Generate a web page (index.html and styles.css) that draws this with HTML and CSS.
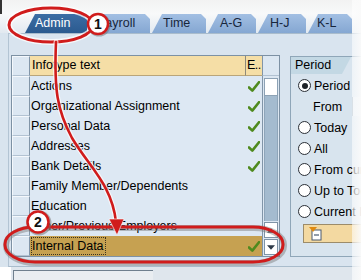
FILE: index.html
```html
<!DOCTYPE html>
<html>
<head>
<meta charset="utf-8">
<link rel="stylesheet" href="styles.css">
</head>
<body>
<div class="screen">
  <div class="top"></div>
  <div class="tabs">
    <div class="tab active w-admin">Admin</div>
    <div class="tab w-payroll">Payroll</div>
    <div class="tab w-time">Time</div>
    <div class="tab w-ag">A-G</div>
    <div class="tab w-hj">H-J</div>
    <div class="tab w-kl">K-L</div>
  </div>
  <div class="panel">
    <div class="table">
      <div class="sel"></div><div class="hcell">Infotype text</div><div class="hcell ecol">E..</div><div class="hscroll"></div>
      <div class="sel"></div><div class="cell">Actions</div><div class="ecell"><svg class="chk" viewBox="0 0 12 11"><path d="M1 6.5 L4.3 9.6 L11 1.2" /></svg></div>
      <div class="scroll">
        <div class="thumb"></div>
        <div class="track"></div>
        <div class="sbtn"><svg viewBox="0 0 9 5" class="arr"><path d="M0 5 L4.5 0 L9 5Z"/></svg></div>
        <div class="sbtn"><svg viewBox="0 0 9 5" class="arr"><path d="M0 0 L4.5 5 L9 0Z"/></svg></div>
      </div>
      <div class="sel"></div><div class="cell">Organizational Assignment</div><div class="ecell"><svg class="chk" viewBox="0 0 12 11"><path d="M1 6.5 L4.3 9.6 L11 1.2" /></svg></div>
      <div class="sel"></div><div class="cell">Personal Data</div><div class="ecell"><svg class="chk" viewBox="0 0 12 11"><path d="M1 6.5 L4.3 9.6 L11 1.2" /></svg></div>
      <div class="sel"></div><div class="cell">Addresses</div><div class="ecell"><svg class="chk" viewBox="0 0 12 11"><path d="M1 6.5 L4.3 9.6 L11 1.2" /></svg></div>
      <div class="sel"></div><div class="cell">Bank Details</div><div class="ecell"><svg class="chk" viewBox="0 0 12 11"><path d="M1 6.5 L4.3 9.6 L11 1.2" /></svg></div>
      <div class="sel"></div><div class="cell">Family Member/Dependents</div><div class="ecell"></div>
      <div class="sel"></div><div class="cell">Education</div><div class="ecell"></div>
      <div class="sel"></div><div class="cell">Other/Previous Employers</div><div class="ecell"></div>
      <div class="sel"></div><div class="cell hl"><span class="focus">Internal Data</span></div><div class="ecell hl"><svg class="chk" viewBox="0 0 12 11"><path d="M1 6.5 L4.3 9.6 L11 1.2" /></svg></div>
    </div>
    <div class="group">
      <div class="ghead">Period</div>
      <div class="opts">
        <div class="opt"><span class="radio on"></span><span>Period</span></div>
        <div class="opt from"><span>From</span><span class="field"></span></div>
        <div class="opt"><span class="radio"></span><span>Today</span></div>
        <div class="opt"><span class="radio"></span><span>All</span></div>
        <div class="opt"><span class="radio"></span><span>From current date</span></div>
        <div class="opt"><span class="radio"></span><span>Up to Today</span></div>
        <div class="opt"><span class="radio"></span><span>Current Period</span></div>
        <div class="gbtn">
          <svg class="gicon" viewBox="0 0 14 14">
            <rect x="3" y="3" width="9" height="10" fill="#fff" stroke="#4a5a70" stroke-width="1"/>
            <path d="M5 8 H10" stroke="#4a5a70" stroke-width="1.2"/>
            <path d="M0 0 H8 L4 5Z" fill="#e08a10"/>
          </svg>
        </div>
      </div>
    </div>
  </div>
  <div class="bottom">
    <div class="bwhite"></div>
    <div class="bbox"></div>
  </div>

  <svg class="annot" viewBox="0 0 361 280" width="361" height="280">
    <g fill="none" stroke-linecap="round">
      <ellipse cx="51" cy="25" rx="42" ry="17" stroke="rgba(255,255,255,0.75)" stroke-width="6"/>
      <ellipse cx="51" cy="25" rx="42" ry="17" stroke="#d01c1c" stroke-width="3"/>
      <path d="M56 42 C54 90, 57 110, 72 138 C90 168, 112 185, 116 222" stroke="rgba(255,255,255,0.7)" stroke-width="5"/>
      <path d="M56 42 C54 90, 57 110, 72 138 C90 168, 112 185, 116 222" stroke="#d01c1c" stroke-width="2.6"/>
      <rect x="5" y="227" width="278" height="35" rx="30" ry="17" stroke="rgba(120,120,120,0.45)" stroke-width="6" transform="translate(1 1)"/>
      <rect x="5" y="227" width="278" height="35" rx="30" ry="17" stroke="#d01c1c" stroke-width="3"/>
    </g>
    <path d="M109 219 L124 219 L117 235Z" fill="#d01c1c" stroke="rgba(255,255,255,0.6)" stroke-width="1"/>
    <circle cx="99" cy="25" r="11.5" fill="rgba(110,110,110,0.5)"/>
    <circle cx="98" cy="24" r="10" fill="#fff" stroke="#d01c1c" stroke-width="2.5"/>
    <text x="98" y="29" class="num">1</text>
    <circle cx="39" cy="223" r="12.5" fill="rgba(110,110,110,0.5)"/>
    <circle cx="38" cy="222" r="10.5" fill="#fff" stroke="#d01c1c" stroke-width="2.5"/>
    <text x="38" y="227" class="num">2</text>
  </svg>
  <div class="fade"></div>
</div>
</body>
</html>
```

FILE: styles.css
```css
* { box-sizing: border-box; }
html, body { margin: 0; padding: 0; }
body {
  width: 361px;
  height: 280px;
  overflow: hidden;
  font-family: "Liberation Sans", Arial, sans-serif;
  font-size: 12.5px;
  color: #000;
}
.screen {
  position: relative;
  width: 361px;
  height: 280px;
  overflow: hidden;
  display: flex;
  flex-direction: column;
  background: #d9e4ee;
}
.top {
  flex: none;
  height: 14px;
  background: linear-gradient(#f2f2f2, #f8f9fa);
  border-left: 2px solid #333;
}
.tabs {
  flex: none;
  height: 19px;
  display: flex;
  align-items: flex-end;
  gap: 2px;
  padding-left: 25px;
  background: linear-gradient(#f8f9fa, #e2e9f0);
}
.tab {
  height: 19px;
  line-height: 19px;
  padding-left: 10px;
  white-space: nowrap;
  color: #17263c;
  background: linear-gradient(#a2bfe3, #85a7d2);
  clip-path: polygon(10px 0, calc(100% - 5px) 0, 100% 5px, 100% 100%, 0 100%);
}
.tab.active {
  color: #fff;
  background: linear-gradient(#3c6da4, #2b5a8f);
}
.w-admin { width: 62px; }
.w-payroll { width: 61px; padding-left: 8px; }
.w-time { width: 54px; padding-left: 11px; }
.w-ag { width: 48px; padding-left: 12px; }
.w-hj { width: 48px; padding-left: 12px; }
.w-kl { width: 44px; padding-left: 9px; }

.panel {
  flex: none;
  height: 234px;
  margin-left: 8px;
  border-top: 1px solid #a9bccc;
  border-left: 1px solid #b3c4d3;
  border-bottom: 1px solid #a9bccc;
  display: flex;
  align-items: flex-start;
  padding: 21px 0 0 2px;
  background: #d9e4ef;
}
.table {
  flex: none;
  display: grid;
  grid-template-columns: 18px 215px 17px 17px;
  grid-template-rows: repeat(10, 20px);
  border: 1px solid #7d91a4;
  background: #dde8f3;
}
.sel {
  background: #dce7f2;
  border-top: 1px solid #f4f8fc;
  border-left: 1px solid #f4f8fc;
  border-right: 1px solid #8195a8;
  border-bottom: 1px solid #b2c2d2;
}
.hcell {
  background: #f5dea6;
  border-bottom: 1px solid #b9a57a;
  line-height: 19px;
  padding-left: 2px;
  white-space: nowrap;
}
.ecol {
  border-left: 1px solid #8e8a7a;
  padding-left: 1px;
  letter-spacing: -0.5px;
  overflow: hidden;
}
.hscroll {
  border-left: 1px solid #8195a8;
  border-bottom: 1px solid #b2c2d2;
  background: #dce7f2;
}
.cell {
  line-height: 20px;
  padding-left: 1px;
  white-space: nowrap;
  overflow: hidden;
}
.ecell {
  display: flex;
  align-items: center;
  justify-content: center;
}
.hl { background: #c6a151; }
.focus {
  display: inline-block;
  line-height: 16px;
  margin-top: 1px;
  border: 1px dotted #3a3320;
  padding: 0 1px 0 0;
}
.chk {
  width: 12px;
  height: 11px;
  fill: none;
  stroke: #4f8a1e;
  stroke-width: 2.6;
  stroke-linecap: round;
  stroke-linejoin: round;
}
.scroll {
  grid-column: 4;
  grid-row: 2 / 11;
  display: flex;
  flex-direction: column;
  border-left: 1px solid #8195a8;
  background: #dce7f2;
  padding: 2px 1px 1px 1px;
}
.thumb {
  height: 18px;
  background: #fff;
  border: 1px solid #8da2b5;
}
.track {
  flex: 1;
  background: #a4bbcf;
  border-left: 1px solid #8ea5b9;
  border-right: 1px solid #8ea5b9;
}
.sbtn {
  height: 16px;
  margin-top: 1px;
  background: #fff;
  border: 1px solid #7e93a6;
  display: flex;
  align-items: center;
  justify-content: center;
}
.arr { width: 8px; height: 5px; fill: #2e3a48; }

.group {
  flex: none;
  width: 80px;
  height: 201px;
  margin-left: 10px;
  margin-top: 1px;
  border: 1px solid #8fa6b8;
  background: #d8e4ee;
  display: flex;
  flex-direction: column;
}
.ghead {
  width: 60px;
  height: 17px;
  line-height: 17px;
  padding-left: 4px;
  background: #c3d8e4;
  clip-path: polygon(0 0, 100% 0, calc(100% - 9px) 100%, 0 100%);
  white-space: nowrap;
}
.opts {
  display: flex;
  flex-direction: column;
  padding: 1px 0 0 7px;
}
.opt {
  height: 21px;
  display: flex;
  align-items: center;
  gap: 3px;
  white-space: nowrap;
}
.radio {
  flex: none;
  width: 13px;
  height: 13px;
  border-radius: 50%;
  border: 1px solid #2a2f36;
  background: #fff;
  display: flex;
  align-items: center;
  justify-content: center;
}
.radio.on::after {
  content: "";
  width: 6px;
  height: 6px;
  border-radius: 50%;
  background: #1e2328;
}
.from {
  padding-left: 15px;
  gap: 10px;
}
.field {
  width: 30px;
  height: 19px;
  border-left: 1px solid #a7b8c6;
  background: #e4ecf3;
}
.gbtn {
  margin-top: 2px;
  margin-left: 5px;
  height: 19px;
  width: 80px;
  background: #f3d9a1;
  border: 1px solid #9c8c6a;
  display: flex;
  align-items: center;
  padding-left: 5px;
}
.gicon { width: 14px; height: 14px; }

.bottom {
  flex: 1;
  display: flex;
  background: #dfe6ed;
  padding-top: 3px;
}
.bwhite { width: 11px; background: #fff; margin-top: -3px; }
.bbox {
  width: 140px;
  margin-left: 2px;
  border-top: 1px solid #6f7f8e;
  border-left: 1px solid #6f7f8e;
  background: #e9edf1;
}

.annot {
  position: absolute;
  left: 0;
  top: 0;
  pointer-events: none;
}
.num {
  font-family: "Liberation Sans", Arial, sans-serif;
  font-weight: bold;
  font-size: 14px;
  text-anchor: middle;
  fill: #111;
}
.fade {
  position: absolute;
  right: 0;
  top: 0;
  width: 9px;
  height: 280px;
  background: linear-gradient(to right, rgba(255,255,255,0.55), rgba(250,250,250,0.95));
}
```
